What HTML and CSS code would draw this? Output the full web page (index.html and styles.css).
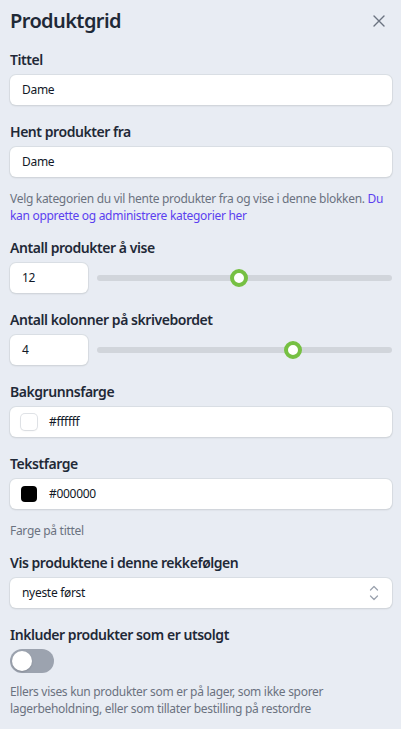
FILE: index.html
```html
<!DOCTYPE html>
<html lang="no">
<head>
<meta charset="utf-8">
<title>Produktgrid</title>
<link rel="stylesheet" href="styles.css">
</head>
<body>
<div class="panel">
  <header class="head">
    <h1 class="title">Produktgrid</h1>
    <button class="close" aria-label="Lukk">
      <svg width="12" height="12" viewBox="0 0 12 12"><path d="M1 1L11 11M11 1L1 11" stroke="#6b7280" stroke-width="1.4" stroke-linecap="round" fill="none"/></svg>
    </button>
  </header>

  <div class="field">
    <div class="label">Tittel</div>
    <div class="input">Dame</div>
  </div>

  <div class="field field-help">
    <div class="label">Hent produkter fra</div>
    <div class="input">Dame</div>
    <p class="help">Velg kategorien du vil hente produkter fra og vise i denne blokken. <a class="link" href="#">Du kan opprette og administrere kategorier her</a></p>
  </div>

  <div class="field">
    <div class="label">Antall produkter å vise</div>
    <div class="range-row">
      <div class="input num">12</div>
      <div class="track"><span class="thumb" style="left:48.1%"></span></div>
    </div>
  </div>

  <div class="field">
    <div class="label">Antall kolonner på skrivebordet</div>
    <div class="range-row">
      <div class="input num">4</div>
      <div class="track"><span class="thumb" style="left:66.4%"></span></div>
    </div>
  </div>

  <div class="field">
    <div class="label">Bakgrunnsfarge</div>
    <div class="input color">
      <span class="swatch swatch-white"></span>
      <span>#ffffff</span>
    </div>
  </div>

  <div class="field field-help">
    <div class="label">Tekstfarge</div>
    <div class="input color">
      <span class="swatch swatch-black"></span>
      <span>#000000</span>
    </div>
    <p class="help">Farge på tittel</p>
  </div>

  <div class="field">
    <div class="label">Vis produktene i denne rekkefølgen</div>
    <div class="input select">
      <span>nyeste først</span>
      <svg class="chev" width="10" height="16" viewBox="0 0 10 16"><path d="M1.5 5L5 1.5L8.5 5M1.5 11L5 14.5L8.5 11" stroke="#9ca3af" stroke-width="1.3" stroke-linecap="round" stroke-linejoin="round" fill="none"/></svg>
    </div>
  </div>

  <div class="field">
    <div class="label label-toggle">Inkluder produkter som er utsolgt</div>
    <div class="toggle"><span class="knob"></span></div>
    <p class="help help-toggle">Ellers vises kun produkter som er på lager, som ikke sporer lagerbeholdning, eller som tillater bestilling på restordre</p>
  </div>
</div>
</body>
</html>
```

FILE: styles.css
```css
* { box-sizing: border-box; }
html, body { margin: 0; padding: 0; }
body {
  background: #e8ecf3;
  font-family: "Noto Sans", "Open Sans", sans-serif;
  color: #1f2937;
}
.panel {
  padding: 7px 9px 20px 10px;
}
.head {
  display: flex;
  align-items: center;
  justify-content: space-between;
  height: 28px;
  margin-bottom: 15px;
}
.title {
  margin: 0;
  font-size: 20px;
  line-height: 28px;
  font-weight: 600;
  letter-spacing: -0.6px;
  color: #1f2937;
}
.close {
  border: 0;
  background: none;
  padding: 0;
  margin-right: 7px;
  width: 12px;
  height: 12px;
  display: flex;
}
.field {
  margin-bottom: 17px;
}
.field-help {
  margin-bottom: 14px;
}
.label {
  font-size: 14px;
  line-height: 20px;
  font-weight: 600;
  letter-spacing: -0.45px;
  margin-bottom: 5px;
  color: #1f2937;
}
.label-toggle { margin-bottom: 4px; }
.input {
  height: 30px;
  background: #fff;
  border-radius: 6px;
  box-shadow: 0 0 0 1px rgba(209, 213, 219, 0.6), 0 1px 2px rgba(0, 0, 0, 0.12);
  font-size: 12px;
  line-height: 30px;
  letter-spacing: -0.3px;
  padding: 0 12px;
  color: #111827;
}
.range-row {
  display: flex;
  align-items: center;
  gap: 9px;
}
.num {
  width: 78px;
  flex: none;
}
.track {
  flex: 1;
  height: 6px;
  border-radius: 3px;
  background: #d1d5db;
  position: relative;
}
.thumb {
  position: absolute;
  top: 50%;
  width: 18px;
  height: 18px;
  margin: -9px 0 0 -9px;
  border-radius: 50%;
  background: #fff;
  border: 4px solid #76c043;
}
.color {
  display: flex;
  align-items: center;
  gap: 12px;
  padding-left: 11px;
}
.swatch {
  width: 16px;
  height: 16px;
  border-radius: 4px;
  flex: none;
}
.swatch-white {
  background: #fff;
  box-shadow: 0 0 0 1px rgba(209, 213, 219, 0.7), 0 1px 2px rgba(0, 0, 0, 0.08);
}
.swatch-black {
  background: #000;
}
.select {
  display: flex;
  align-items: center;
  justify-content: space-between;
  padding-right: 13px;
}
.chev { display: block; }
.help {
  margin: 13px 0 0;
  font-size: 12px;
  line-height: 17px;
  letter-spacing: -0.3px;
  color: #6b7280;
}
.help-toggle { margin-top: 10px; }
.link {
  color: #5b3ff0;
  text-decoration: none;
}
.toggle {
  width: 44px;
  height: 24px;
  border-radius: 12px;
  background: #9ca3af;
  padding: 2px;
}
.knob {
  display: block;
  width: 20px;
  height: 20px;
  border-radius: 50%;
  background: #fff;
  box-shadow: 0 1px 2px rgba(0, 0, 0, 0.15);
}
```
